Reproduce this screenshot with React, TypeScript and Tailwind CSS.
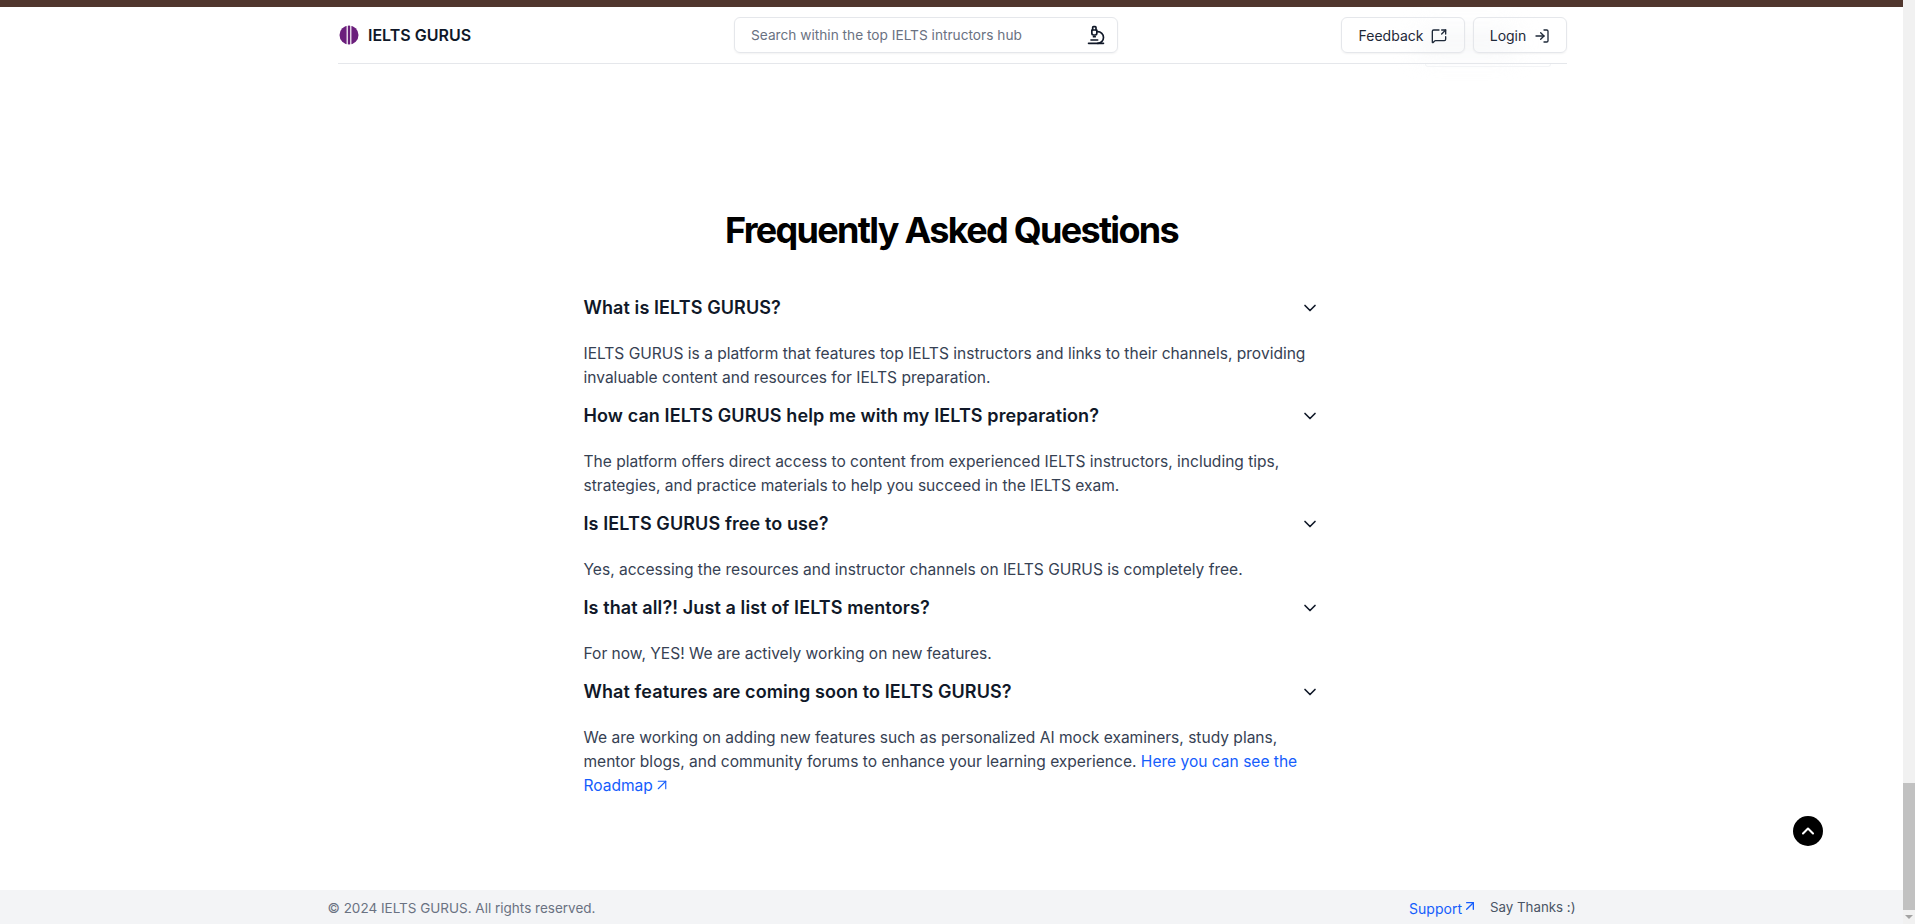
import { ArrowUpRight, ChevronDown, ChevronUp, LogIn, MessageSquareShare, Microscope } from 'lucide-react';
import type { ReactNode } from 'react';

const faqs: { q: string; a: ReactNode }[] = [
  {
    q: 'What is IELTS GURUS?',
    a: 'IELTS GURUS is a platform that features top IELTS instructors and links to their channels, providing invaluable content and resources for IELTS preparation.',
  },
  {
    q: 'How can IELTS GURUS help me with my IELTS preparation?',
    a: 'The platform offers direct access to content from experienced IELTS instructors, including tips, strategies, and practice materials to help you succeed in the IELTS exam.',
  },
  {
    q: 'Is IELTS GURUS free to use?',
    a: 'Yes, accessing the resources and instructor channels on IELTS GURUS is completely free.',
  },
  {
    q: 'Is that all?! Just a list of IELTS mentors?',
    a: 'For now, YES! We are actively working on new features.',
  },
  {
    q: 'What features are coming soon to IELTS GURUS?',
    a: (
      <>
        We are working on adding new features such as personalized AI mock examiners, study plans, mentor blogs, and community forums to enhance your learning experience.{' '}
        <a className="text-blue-600">
          Here you can see the Roadmap
          <ArrowUpRight className="mb-1 inline-block h-[18px] w-[18px]" strokeWidth={1.5} />
        </a>
      </>
    ),
  },
];

function Logo() {
  return (
    <svg width="20" height="20" viewBox="0 0 20 20">
      <circle cx="10" cy="10" r="9.5" fill="#6b1f7c" />
      <rect x="7.6" y="0" width="1.2" height="20" fill="#fff" />
      <rect x="11.2" y="0" width="1.2" height="20" fill="#fff" />
    </svg>
  );
}

export default function App() {
  return (
    <div className="relative flex h-screen overflow-hidden bg-white font-['Inter',sans-serif]">
      <div className="flex min-w-0 flex-1 flex-col">
        <div className="h-[7px] shrink-0 bg-[#50362d]" />

        <header className="relative mx-auto w-[1231px] shrink-0 pl-[2px]">
          <div className="absolute right-[50px] top-[24px] h-[24px] w-[100px] rounded-md bg-gray-100 opacity-70 blur-md" />
          <div className="relative grid h-[57px] grid-cols-[396px_384px_1fr] items-center border-b border-gray-200">
            <div className="flex items-center gap-[9px] pl-px">
              <Logo />
              <span className="text-[16px] font-semibold text-gray-900">IELTS GURUS</span>
            </div>
            <div className="flex h-[36px] items-center justify-between rounded-md border border-gray-200 pl-[16px] pr-[11px] shadow-xs">
              <span className="pt-px text-[13.7px] text-gray-500">Search within the top IELTS intructors hub</span>
              <Microscope className="h-5 w-5 text-gray-900" strokeWidth={2} />
            </div>
            <div className="flex justify-end gap-2">
              <button className="flex h-[36px] w-[124px] items-center justify-center gap-2 rounded-md border border-gray-200 pt-px text-sm text-gray-800 shadow-xs">
                Feedback
                <MessageSquareShare className="h-4 w-4" strokeWidth={2} />
              </button>
              <button className="flex h-[36px] w-[94px] items-center justify-center gap-2 rounded-md border border-gray-200 pt-px text-[14px] text-gray-800 shadow-xs">
                Login
                <LogIn className="h-4 w-4" strokeWidth={2} />
              </button>
            </div>
          </div>
          <div className="absolute right-[16px] top-[57px] h-[3px] w-[126px] rounded-b-md border border-t-0 border-gray-100" />
        </header>

        <main className="min-h-0 flex-1">
          <div className="mx-auto w-[736px] pt-[146px]">
            <h1 className="text-center text-[36px] font-bold leading-[40px] tracking-[-1.7px] text-black">Frequently Asked Questions</h1>
            <div className="mt-[34px] flex flex-col">
              {faqs.map((f) => (
                <div key={f.q} className="pb-[2px]">
                  <div className="flex h-[48px] items-center justify-between">
                    <span className="text-lg font-semibold tracking-[0.1px] text-gray-900">{f.q}</span>
                    <ChevronDown className="h-5 w-5 text-gray-900" strokeWidth={2} />
                  </div>
                  <p className="mt-[10px] text-[15.55px] leading-[24px] text-gray-700">{f.a}</p>
                </div>
              ))}
            </div>
          </div>
        </main>

        <footer className="h-[34px] shrink-0 bg-gray-100">
          <div className="mx-auto flex h-full w-[1248px] items-center justify-between pt-[2px] text-[13.5px]">
            <span className="text-gray-500">© 2024 IELTS GURUS. All rights reserved.</span>
            <div className="flex items-center gap-[12px]">
              <a className="flex items-center text-[14px] text-blue-600">
                Support
                <ArrowUpRight className="mb-1 h-4 w-4" strokeWidth={2} />
              </a>
              <a className="text-[13.3px] text-gray-600">Say Thanks :)</a>
            </div>
          </div>
        </footer>
      </div>

      <div className="flex w-3 shrink-0 flex-col bg-[#f1f1f1]">
        <div className="mt-[783px] h-[127px] bg-[#c1c1c1]" />
        <div className="mt-auto flex h-[14px] items-center justify-center">
          <div className="h-0 w-0 border-x-[4px] border-t-[4px] border-x-transparent border-t-[#a3a3a3]" />
        </div>
      </div>

      <button className="absolute left-[1793px] top-[816px] flex h-[30px] w-[30px] items-center justify-center rounded-full bg-black text-white">
        <ChevronUp className="h-5 w-5" strokeWidth={2.5} />
      </button>
    </div>
  );
}
